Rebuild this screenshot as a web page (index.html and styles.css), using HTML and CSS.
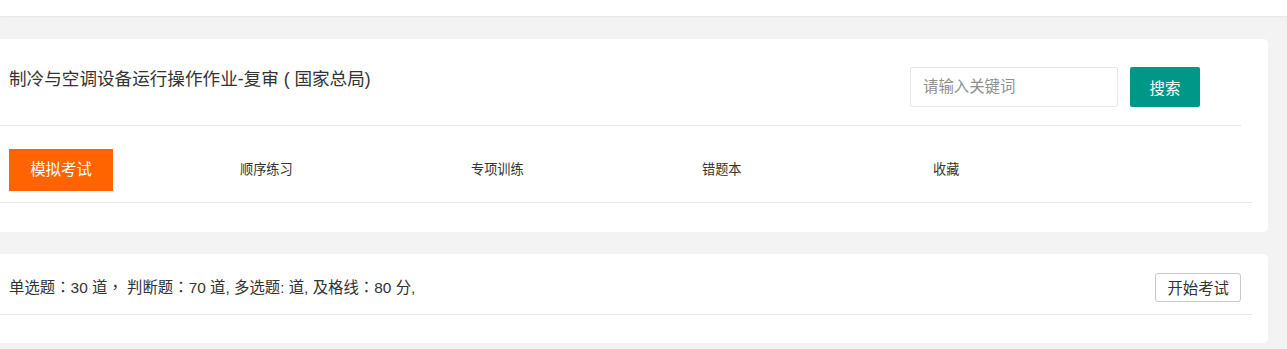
FILE: index.html
```html
<!DOCTYPE html>
<html lang="zh-CN">
<head>
	<meta charset="UTF-8">
	<title>制冷与空调设备运行操作作业-复审</title>
	<link rel="stylesheet" href="styles.css">
</head>
<body>
	<div class="topbar"></div>

	<div class="main">
		<div class="card">
			<div class="card-head">
				<h2 class="title">制冷与空调设备运行操作作业-复审 ( 国家总局)</h2>
				<form class="search">
					<input type="text" placeholder="请输入关键词">
					<button type="button">搜索</button>
				</form>
			</div>
			<ul class="tabs">
				<li class="tab active">模拟考试</li>
				<li class="tab">顺序练习</li>
				<li class="tab">专项训练</li>
				<li class="tab">错题本</li>
				<li class="tab">收藏</li>
			</ul>
		</div>

		<div class="card card-exam">
			<div class="exam-row">
				<p class="exam-info">单选题<span class="punct" lang="zh-TW">：</span>30 道<span class="punct" lang="zh-TW">，</span> 判断题<span class="punct" lang="zh-TW">：</span>70 道, 多选题: 道, 及格线<span class="punct" lang="zh-TW">：</span>80 分,</p>
				<button type="button" class="start-btn">开始考试</button>
			</div>
		</div>
	</div>
</body>
</html>
```

FILE: styles.css
```css
html,body,div,p,h2,ul,li,form{
	padding: 0;
	margin: 0;
	border: 0;
}
body{
	background-color: #f3f3f3;
	color: #333;
	font-family: "Liberation Sans", "Noto Sans CJK SC", sans-serif;
}
ul{
	list-style: none;
}
input:focus,button:focus{
	outline: none;
}
.topbar{
	height: 16px;
	background-color: #fff;
	box-shadow: 0 1px 2px rgba(0,0,0,.06);
}
.main{
	padding-top: 23px;
	margin-right: 19px;
}
.card{
	background-color: #fff;
	border-radius: 0 5px 5px 0;
	padding-bottom: 29px;
}
.card-exam{
	margin-top: 22px;
	padding-bottom: 28px;
}

/* 标题 + 搜索 */
.card-head{
	display: flex;
	justify-content: space-between;
	align-items: flex-start;
	padding: 28px 41px 18px 9px;
	margin-right: 27px;
	border-bottom: 1px solid #e6e6e6;
}
.title{
	font-size: 17.6px;
	font-weight: normal;
	line-height: 24px;
	color: #333;
}
.search{
	display: flex;
	gap: 12px;
}
.search input{
	width: 208px;
	height: 40px;
	box-sizing: border-box;
	padding-left: 12px;
	border: 1px solid #e6e6e6;
	border-radius: 2px;
	font-family: inherit;
	font-size: 15.4px;
	color: #333;
}
.search input::placeholder{
	color: #8f8f8f;
}
.search button{
	width: 70px;
	height: 40px;
	border: 0;
	border-radius: 2px;
	background-color: #009688;
	color: #fff;
	font-family: inherit;
	font-size: 15.4px;
}

/* 选项卡 */
.tabs{
	display: flex;
	padding: 23px 0 11px 9px;
	margin-right: 16px;
	border-bottom: 1px solid #e6e6e6;
}
.tab{
	width: 231px;
	line-height: 42px;
	font-size: 13.2px;
	color: #333;
}
.tab.active{
	width: 104px;
	margin-right: 127px;
	text-align: center;
	background-color: #ff6400;
	color: #fff;
	font-size: 15.4px;
}

/* 考试信息 */
.exam-info{
	font-size: 15.4px;
	line-height: 24px;
}
/* 全角标点居中 */
.exam-info .punct{
	font-family: "Noto Sans CJK TC", sans-serif;
}
.exam-row{
	display: flex;
	justify-content: space-between;
	align-items: center;
	box-sizing: border-box;
	height: 61px;
	padding: 6px 11px 0 9px;
	margin-right: 16px;
	border-bottom: 1px solid #e6e6e6;
}
.start-btn{
	height: 29px;
	padding: 0 11px;
	border: 1px solid #c9c9c9;
	border-radius: 3px;
	background-color: #fff;
	color: #333;
	font-family: inherit;
	font-size: 15.4px;
}
```
